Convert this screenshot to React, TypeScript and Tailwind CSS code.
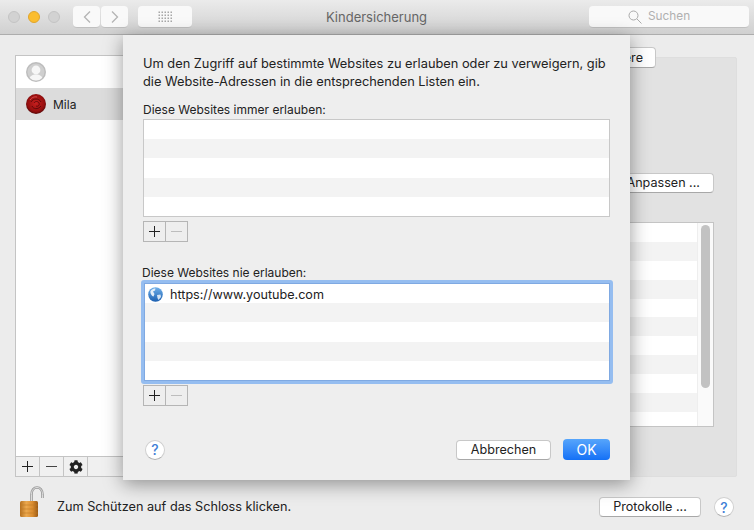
import React from "react";
import { FaCog } from "react-icons/fa";

const font = { fontFamily: "Inter, 'Liberation Sans', sans-serif" };

function Rows({ count, h }: { count: number; h: string }) {
  return (
    <>
      {Array.from({ length: count }).map((_, i) => (
        <div key={i} className={`${h} ${i % 2 === 0 ? "bg-white" : "bg-[#f3f3f3]"}`} />
      ))}
    </>
  );
}

function PlusMinus() {
  return (
    <div className="flex h-[21px] w-[45px] border border-[#b5b5b5]">
      <div className="flex w-[22px] items-center justify-center border-r border-[#b5b5b5]">
        <svg width="13" height="13" viewBox="0 0 13 13"><path d="M6.5 1v11M1 6.5h11" stroke="#222" strokeWidth="1" /></svg>
      </div>
      <div className="flex flex-1 items-center justify-center">
        <svg width="13" height="13" viewBox="0 0 13 13"><path d="M1 6.5h11" stroke="#bdbdbd" strokeWidth="1" /></svg>
      </div>
    </div>
  );
}

function Help({ className = "" }: { className?: string }) {
  return (
    <div className={`flex h-[20px] w-[20px] items-center justify-center rounded-full border border-[#d0d0d0] border-b-[#b0b0b0] bg-white text-[14px] font-medium text-[#3f7fd6] ${className}`}>?</div>
  );
}

function Btn({ children, className = "" }: { children: React.ReactNode; className?: string }) {
  return (
    <div className={`flex items-center rounded-[4px] border border-[#c8c8c8] border-b-[#a8a8a8] bg-white pt-[1px] text-[12.6px] text-[#222] ${className}`}>{children}</div>
  );
}

function Avatar() {
  return (
    <svg width="20" height="20" viewBox="0 0 20 20">
      <defs>
        <clipPath id="av"><circle cx="10" cy="10" r="8.6" /></clipPath>
      </defs>
      <circle cx="10" cy="10" r="10" fill="#bdbdbd" />
      <g clipPath="url(#av)">
        <circle cx="10" cy="10" r="9" fill="#cfcfcf" />
        <circle cx="10" cy="8" r="4.4" fill="#f6f6f6" />
        <path d="M2.5 19c.5-5 4-6.500 7.500-6.500s7 1.500 7.500 6.500z" fill="#f6f6f6" />
      </g>
    </svg>
  );
}

function Rose() {
  return (
    <svg width="20" height="20" viewBox="0 0 20 20">
      <defs>
        <radialGradient id="rose" cx="50%" cy="45%" r="60%">
          <stop offset="0" stopColor="#c81f1f" />
          <stop offset="0.7" stopColor="#960f0f" />
          <stop offset="1" stopColor="#3d0505" />
        </radialGradient>
      </defs>
      <circle cx="10" cy="10" r="10" fill="url(#rose)" />
      <path d="M5 8c2-4 8-4 10 0M6 12c1 3 6 4 9 0M8 9c1-2 4-2 5 0s-1 4-3 3" fill="none" stroke="#5a0808" strokeWidth="0.9" />
      <path d="M4 6c2-3 5-3.500 7-3" fill="none" stroke="#d85050" strokeWidth="1" />
    </svg>
  );
}

function Globe() {
  return (
    <svg width="15" height="15" viewBox="0 0 15 15">
      <defs>
        <linearGradient id="globe" x1="0" y1="0" x2="0" y2="1">
          <stop offset="0" stopColor="#6fb0ea" />
          <stop offset="1" stopColor="#1c5fb0" />
        </linearGradient>
      </defs>
      <circle cx="7.500" cy="7.500" r="7.300" fill="url(#globe)" />
      <path d="M2.500 4c1.500-2 3.500-2.500 5-2.500l-.5 2-2 1 1.500 2.500-1 2.500C3.500 9 2 6 2.500 4z" fill="#e4eef8" />
      <path d="M9 8l3.500-.5.500 2.500-2.500 3L9.500 11z" fill="#d5e4f4" />
    </svg>
  );
}

function Lock() {
  return (
    <svg width="26" height="32" viewBox="0 0 26 32" className="mb-[10px]">
      <defs>
        <linearGradient id="lockb" x1="0" y1="0" x2="1" y2="0">
          <stop offset="0" stopColor="#b5701f" />
          <stop offset="0.35" stopColor="#eca94f" />
          <stop offset="0.7" stopColor="#d98b2e" />
          <stop offset="1" stopColor="#9a5a16" />
        </linearGradient>
      </defs>
      <path d="M12.500 16V8.500C12.500 4 15 1.500 18 1.500S23.500 4 23.500 8.500V12" fill="none" stroke="#9a9a9a" strokeWidth="2.600" />
      <path d="M12.500 16V8.500C12.500 4 15 1.500 18 1.500S23.500 4 23.500 8.500V12" fill="none" stroke="#eeeeee" strokeWidth="0.800" />
      <rect x="1" y="15" width="18" height="16" rx="1.500" fill="url(#lockb)" />
      <path d="M1 19h18M1 23h18M1 27h18" stroke="#c07a24" strokeWidth="0.600" />
    </svg>
  );
}

function Dot({ c }: { c: string }) {
  return <div className={`h-[12px] w-[12px] rounded-full border ${c}`} />;
}

export default function App() {
  return (
    <div className="relative flex h-[530px] w-[754px] flex-col overflow-hidden bg-[#ececec] text-[13px] text-[#222]" style={font}>
      {/* Title bar */}
      <div className="relative flex h-[35px] shrink-0 items-center border-b border-[#adadad] bg-gradient-to-b from-[#ebebeb] to-[#d0d0d0] pl-[8px] pr-[5px]">
        <div className="flex gap-[8px]">
          <Dot c="border-[#c4c4c4] bg-[#d2d2d2]" />
          <Dot c="border-[#e0a52c] bg-[#fbbd2f]" />
          <Dot c="border-[#c4c4c4] bg-[#d2d2d2]" />
        </div>
        <div className="ml-[13px] flex gap-px">
          <div className="flex h-[22px] w-[27px] items-center justify-center rounded-[4px] border-b border-[#c0c0c0] bg-[#f9f9f9]">
            <svg width="10" height="14" viewBox="0 0 10 14"><path d="M8 1.500 2.500 7 8 12.500" fill="none" stroke="#b4b4b4" strokeWidth="1.300" /></svg>
          </div>
          <div className="flex h-[22px] w-[27px] items-center justify-center rounded-[4px] border-b border-[#c0c0c0] bg-[#f9f9f9]">
            <svg width="10" height="14" viewBox="0 0 10 14"><path d="M2 1.500 7.500 7 2 12.500" fill="none" stroke="#b4b4b4" strokeWidth="1.300" /></svg>
          </div>
        </div>
        <div className="ml-[10px] flex h-[22px] w-[54px] items-center justify-center rounded-[4px] border-b border-[#c0c0c0] bg-[#f9f9f9]">
          <svg width="15" height="11" viewBox="0 0 15 11" fill="#a8a8a8">
            {[0, 1, 2, 3, 4].map((x) =>
              [0, 1, 2, 3].map((y) => <rect key={`${x}-${y}`} x={x * 3 + 0.5} y={y * 3 + 0.5} width="1.500" height="1.500" />)
            )}
          </svg>
        </div>
        <div className="flex-1 pr-[28px] pt-[2px] text-center text-[13px] text-[#666]">Kindersicherung</div>
        <div className="flex h-[22px] w-[160px] items-center gap-[6px] rounded-[4px] border-b border-[#c0c0c0] bg-[#f9f9f9] pl-[39px] text-[11.8px] text-[#b0b0b0]">
          <svg width="14" height="14" viewBox="0 0 14 14" fill="none" stroke="#aaa" strokeWidth="1"><circle cx="5.500" cy="5.500" r="4.500" /><path d="m9 9 4.500 4.500" /></svg>
          <span className="pt-[1px]">Suchen</span>
        </div>
      </div>

      {/* Main */}
      <div className="flex h-[442px] shrink-0 pl-[15px] pr-[17px] pt-[20px]">
        <div className="flex h-[422px] w-[170px] flex-col border border-[#c4c4c4] bg-white">
          <div className="flex h-[32px] items-center pl-[10px]"><Avatar /></div>
          <div className="flex h-[32px] items-center gap-[7px] bg-[#dcdcdc] pl-[10px] text-[12px]"><Rose /><span className="pt-[1px]">Mila</span></div>
          <div className="flex-1" />
          <div className="flex h-[20px] border-t border-[#c4c4c4] bg-[#f0f0f0]">
            <div className="flex w-[24px] items-center justify-center border-r border-[#c4c4c4]">
              <svg width="13" height="13" viewBox="0 0 13 13"><path d="M6.500 1v11M1 6.500h11" stroke="#222" /></svg>
            </div>
            <div className="flex w-[24px] items-center justify-center border-r border-[#c4c4c4]">
              <svg width="13" height="13" viewBox="0 0 13 13"><path d="M1 6.500h11" stroke="#444" /></svg>
            </div>
            <div className="flex w-[24px] items-center justify-center border-r border-[#c4c4c4]"><FaCog className="h-[14px] w-[14px] text-[#222]" /></div>
          </div>
        </div>
        <div className="relative ml-[10px] mt-[2px] flex h-[420px] flex-1 flex-col items-end rounded-[2px] border border-[#dedede] bg-[#e2e2e2] pr-[22px]">
          <Btn className="absolute right-[80px] top-[-11px] h-[21px] w-[90px] justify-end pr-[12px]">Weitere</Btn>
          <Btn className="mt-[115px] h-[20px] w-[100px] justify-end pr-[13px]">Anpassen ...</Btn>
          <div className="mt-[29px] flex h-[205px] w-[300px] overflow-hidden border border-[#c4c4c4] bg-white">
            <div className="flex-1">
              <Rows count={11} h="h-[18.900px]" />
            </div>
            <div className="w-[16px] border-l border-[#eeeeee] bg-[#fafafa] px-[3px] pt-[2px]">
              <div className="h-[163px] rounded-full bg-[#c2c2c2]" />
            </div>
          </div>
        </div>
      </div>

      {/* Bottom */}
      <div className="flex flex-1 items-center pl-[19px] pr-[20px] pt-[7px]">
        <Lock />
        <div className="ml-[12px] flex-1 text-[12.7px]">Zum Schützen auf das Schloss klicken.</div>
        <Btn className="h-[20px] w-[102px] justify-center">Protokolle ...</Btn>
        <Help className="ml-[13px]" />
      </div>

      {/* Sheet */}
      <div className="absolute left-[123px] top-[35px] flex h-[445px] w-[507px] flex-col bg-[#eeeeee] px-[20px] pt-[20px] shadow-[0_4px_18px_rgba(0,0,0,0.4)]">
        <div className="whitespace-nowrap text-[12.8px] leading-[18px]">
          Um den Zugriff auf bestimmte Websites zu erlauben oder zu verweigern, gib<br />die Website-Adressen in die entsprechenden Listen ein.
        </div>
        <div className="mt-[10px] text-[12px] leading-[18px]">Diese Websites immer erlauben:</div>
        <div className="h-[98px] overflow-hidden border border-[#c8c8c8] bg-white">
          <Rows count={5} h="h-[19.200px]" />
        </div>
        <div className="mt-[4px]"><PlusMinus /></div>
        <div className="ml-[-1px] mt-[22px] text-[12px] leading-[18px]">Diese Websites nie erlauben:</div>
        <div className="relative z-10 ml-[-2px] mr-[-3px] mt-[-2px] h-[104px] overflow-hidden rounded-[3px] border-[3px] border-[#95bdf0] bg-white">
          <div className="h-full border border-[#7fa9e2]">
            <Rows count={5} h="h-[19.200px]" />
          </div>
          <div className="absolute left-[4px] top-[2px] flex items-center gap-[7px] text-[12.6px] leading-[19px]"><Globe />https://www.youtube.com</div>
        </div>
        <div className="mt-[1px]"><PlusMinus /></div>
        <div className="mt-[33px] flex h-[21px] items-center">
          <Help className="ml-[2px]" />
          <div className="flex-1" />
          <Btn className="h-[20px] w-[95px] justify-center">Abbrechen</Btn>
          <div className="ml-[12px] flex h-[21px] w-[47px] items-center justify-center rounded-[4px] bg-gradient-to-b from-[#56a5fb] to-[#1270f6] text-[14px] text-white">OK</div>
        </div>
      </div>
    </div>
  );
}
